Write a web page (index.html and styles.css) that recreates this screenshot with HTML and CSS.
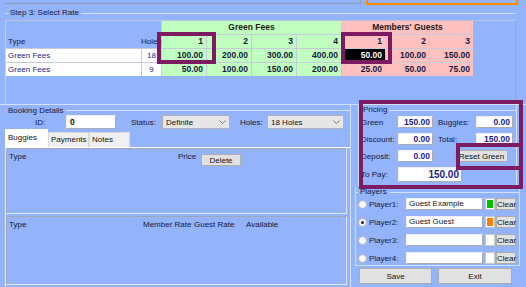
FILE: index.html
```html
<!DOCTYPE html>
<html lang="en">
<head>
  <meta charset="UTF-8">
  <meta name="viewport" content="width=device-width, initial-scale=1.0">
  <title>Select Rate</title>
  <link rel="stylesheet" href="styles.css">
</head>
<body>
  <div class="screen">
    <div class="top-strip">
      <div class="prev-panel"></div>
      <div class="prev-tab"></div>
    </div>

    <!-- Step 3 rate grid -->
    <section class="rates">
      <div class="group-title step-title"><span>Step 3: Select Rate</span></div>
      <div class="rate-box">
        <div class="rate-grid">
          <div class="cell blank type-hd">Type</div>
          <div class="cell blank holes-hd">Holes</div>
          <div class="cell green group-hd span-green">Green Fees</div>
          <div class="cell pink group-hd span-pink">Members' Guests</div>

          <div class="cell green num">1</div>
          <div class="cell green num">2</div>
          <div class="cell green num">3</div>
          <div class="cell green num">4</div>
          <div class="cell pink num">1</div>
          <div class="cell pink num">2</div>
          <div class="cell pink num">3</div>

          <div class="cell white type-cell">Green Fees</div>
          <div class="cell white holes-cell">18</div>
          <div class="cell green num">100.00</div>
          <div class="cell green num">200.00</div>
          <div class="cell green num">300.00</div>
          <div class="cell green num">400.00</div>
          <div class="cell sel num">50.00</div>
          <div class="cell pink num">100.00</div>
          <div class="cell pink num">150.00</div>

          <div class="cell white type-cell">Green Fees</div>
          <div class="cell white holes-cell">9</div>
          <div class="cell green num">50.00</div>
          <div class="cell green num">100.00</div>
          <div class="cell green num">150.00</div>
          <div class="cell green num">200.00</div>
          <div class="cell pink num">25.00</div>
          <div class="cell pink num">50.00</div>
          <div class="cell pink num">75.00</div>
        </div>
      </div>
    </section>

    <div class="lower">
      <!-- Booking details -->
      <div class="booking">
        <div class="group-title booking-title"><span>Booking Details</span></div>
        <div class="fields">
          <span class="lbl lbl-id">ID:</span>
          <div class="input id-input">0</div>
          <span class="lbl lbl-status">Status:</span>
          <div class="select status-select">
            <span>Definite</span>
            <svg width="7" height="4" viewBox="0 0 7 4"><path d="M0.5 0.5L3.5 3.5L6.5 0.5" fill="none" stroke="#777"/></svg>
          </div>
          <span class="lbl lbl-holes">Holes:</span>
          <div class="select holes-select">
            <span>18 Holes</span>
            <svg width="7" height="4" viewBox="0 0 7 4"><path d="M0.5 0.5L3.5 3.5L6.5 0.5" fill="none" stroke="#777"/></svg>
          </div>
        </div>

        <div class="tabs">
          <div class="tab active">Buggies</div>
          <div class="tab">Payments</div>
          <div class="tab">Notes</div>
        </div>

        <div class="tab-panel">
          <div class="list buggies-list">
            <div class="list-head">
              <span class="col-type">Type</span>
              <span class="col-price">Price</span>
              <button class="btn delete-btn">Delete</button>
            </div>
          </div>
          <div class="list extras-list">
            <div class="list-head">
              <span class="col-type2">Type</span>
              <span class="col-member">Member Rate</span>
              <span class="col-guest">Guest Rate</span>
              <span>Available</span>
            </div>
          </div>
        </div>
      </div>

      <!-- Pricing and players -->
      <div class="side">
        <div class="group pricing">
          <div class="group-title"><span>Pricing</span></div>
          <div class="price-grid">
            <span class="plbl">Green</span>
            <div class="input money">150.00</div>
            <span></span>
            <span class="plbl">Buggies:</span>
            <div class="input money">0.00</div>

            <span class="plbl">Discount:</span>
            <div class="input money">0.00</div>
            <span></span>
            <span class="plbl">Total:</span>
            <div class="input money">150.00</div>

            <span class="plbl">Deposit:</span>
            <div class="input money">0.00</div>
            <button class="btn reset-btn">Reset Green</button>

            <span class="plbl">To Pay:</span>
            <div class="input money to-pay">150.00</div>
          </div>
        </div>

        <div class="group players">
          <div class="group-title"><span>Players</span></div>
          <div class="player-rows">
            <div class="player-row">
              <span class="radio"></span>
              <span class="plabel">Player1:</span>
              <div class="input pname">Guest Example</div>
              <span class="swatch swatch-green"></span>
              <button class="btn clear-btn">Clear</button>
            </div>
            <div class="player-row">
              <span class="radio checked"></span>
              <span class="plabel">Player2:</span>
              <div class="input pname">Guest Guest</div>
              <span class="swatch swatch-orange"></span>
              <button class="btn clear-btn">Clear</button>
            </div>
            <div class="player-row">
              <span class="radio"></span>
              <span class="plabel">Player3:</span>
              <div class="input pname"></div>
              <span class="swatch"></span>
              <button class="btn clear-btn">Clear</button>
            </div>
            <div class="player-row">
              <span class="radio"></span>
              <span class="plabel">Player4:</span>
              <div class="input pname"></div>
              <span class="swatch"></span>
              <button class="btn clear-btn">Clear</button>
            </div>
          </div>
        </div>

        <div class="actions">
          <button class="btn save-btn">Save</button>
          <button class="btn exit-btn">Exit</button>
        </div>
      </div>
    </div>

    <!-- annotation boxes drawn over the form -->
    <div class="mark mark-green"></div>
    <div class="mark mark-guest"></div>
    <div class="mark mark-pricing"></div>
    <div class="mark mark-reset"></div>
  </div>
</body>
</html>
```

FILE: styles.css
```css
* {
  box-sizing: border-box;
}

body {
  margin: 0;
  font-family: "Liberation Sans", Arial, sans-serif;
  font-size: 8px;
  color: #151a3c;
  background-color: #93b3fa;
}

.screen {
  position: relative;
  width: 526px;
  height: 287px;
  overflow: hidden;
  background-color: #93b3fa;
}

/* bits of the previous step peeking in at the top */
.top-strip {
  display: flex;
  height: 6px;
}

.prev-panel {
  margin-left: 5px;
  width: 356px;
  height: 4px;
  border-bottom: 1px solid #8e99b2;
  border-right: 1px solid #8e99b2;
}

.prev-tab {
  margin-left: 5px;
  width: 152px;
  height: 5px;
  border: 2px solid #ff8a00;
  border-top: none;
}

/* group box titles */
.group-title {
  display: flex;
  align-items: center;
  height: 10px;
  line-height: 10px;
  white-space: nowrap;
}

.group-title::before {
  content: "";
  width: 2px;
  border-top: 1px solid #d3e0fd;
  margin-right: 2px;
}

.group-title::after {
  content: "";
  flex: 1;
  border-top: 1px solid #d3e0fd;
  margin-left: 2px;
}

.step-title {
  height: 14px;
}

.step-title::before {
  width: 3px;
}

/* rate grid */
.rates {
  margin-left: 5px;
  width: 511px;
}

.rate-box {
  height: 84px;
  border-top: 1px solid #b9c4da;
  border-left: 1px solid #c6d2ea;
  border-right: 1px solid #9aa3b5;
}

.rate-grid {
  display: grid;
  grid-template-columns: 135px 19px repeat(4, 44px) repeat(3, 43px);
  grid-template-rows: repeat(4, 13px);
  gap: 1px;
  width: max-content;
  background-color: #c4cbd9;
}

.cell {
  line-height: 13px;
  padding: 0 3px;
  white-space: nowrap;
  overflow: hidden;
}

.blank {
  background-color: #93b3fa;
}

.green {
  background-color: #c0ffc0;
}

.pink {
  background-color: #ffc0c0;
}

.white {
  background-color: #ffffff;
}

.sel {
  background-color: #000000;
  color: #ffffff;
}

.num {
  text-align: right;
  font-weight: bold;
  font-size: 8.5px;
}

.group-hd {
  text-align: center;
  font-weight: bold;
  font-size: 8.5px;
  color: #2a1a10;
}

.span-green {
  grid-column: 3 / span 4;
}

.span-pink {
  grid-column: 7 / span 3;
}

.type-hd,
.holes-hd {
  grid-row: 1 / span 2;
  display: flex;
  align-items: flex-end;
  padding-left: 2px;
}

.holes-hd {
  padding: 0;
  margin-left: -1px;
  overflow: visible;
}

.type-cell {
  padding-left: 2px;
  color: #25258a;
}

.holes-cell {
  text-align: center;
  color: #25258a;
}

/* lower half */
.lower {
  display: flex;
  height: 183px;
  border-top: 1px solid #d3e0fd;
}

.booking {
  width: 351px;
  border-right: 1px solid #d3e0fd;
}

.booking-title {
  margin-top: 1px;
  height: 9px;
  margin-left: 5px;
}

.booking-title::before {
  width: 1px;
}

.fields {
  display: flex;
  align-items: center;
  height: 14px;
}

.lbl {
  white-space: nowrap;
}

.lbl-id {
  margin-left: 35px;
  width: 11px;
}

.lbl-status {
  margin-left: 15px;
  width: 25px;
}

.lbl-holes {
  margin-left: 10px;
  width: 23px;
}

.input {
  background-color: #ffffff;
  border: 1px solid;
  border-color: #eef0f4 #a7abb5 #a7abb5 #eef0f4;
  white-space: nowrap;
  overflow: hidden;
}

.id-input {
  margin-left: 20px;
  width: 50px;
  height: 14px;
  line-height: 12px;
  padding-left: 3px;
  font-weight: bold;
  font-size: 8.5px;
  color: #111111;
}

.select {
  display: flex;
  align-items: center;
  justify-content: space-between;
  height: 14px;
  padding: 0 3px 0 3px;
  background-color: #e6e6e6;
  border: 1px solid #b3b3b3;
  color: #111111;
}

.status-select {
  margin-left: 6px;
  width: 68px;
}

.holes-select {
  margin-left: 4px;
  width: 77px;
}

/* tabs */
.tabs {
  display: flex;
  align-items: flex-end;
  height: 18px;
  margin-left: 5px;
}

.tab {
  height: 15px;
  line-height: 14px;
  padding-left: 2px;
  width: 41px;
  background-color: #f0f0f0;
  border: 1px solid #d9d9d9;
  border-bottom: none;
  color: #111111;
}

.tab.active {
  width: 43px;
  height: 18px;
  line-height: 17px;
  padding-left: 3px;
  background-color: #ffffff;
  border: none;
}

.tab-panel {
  margin-left: 5px;
  width: 345px;
  height: 140px;
  border-top: 1px solid #ffffff;
  border-left: 1px solid #e9effd;
}

.list {
  width: 341px;
  border: 1px solid;
  border-color: #9ea6b8 #e2e9fb #e2e9fb #9ea6b8;
}

.buggies-list {
  height: 66px;
}

.extras-list {
  margin-top: 2px;
  height: 69px;
}

.list-head {
  display: flex;
  align-items: center;
  height: 14px;
  padding-left: 2px;
  white-space: nowrap;
}

.col-type {
  width: 169px;
}

.col-price {
  width: 23px;
}

.col-type2 {
  width: 134px;
}

.col-member {
  width: 51px;
}

.col-guest {
  width: 52px;
}

.btn {
  padding: 0;
  font-family: "Liberation Sans", Arial, sans-serif;
  font-size: 8px;
  color: #111111;
  background-color: #e1e1e1;
  border: 1px solid #adadad;
}

.delete-btn {
  margin-top: 8px;
  width: 40px;
  height: 12px;
}

/* side panel */
.side {
  width: 170px;
}

.group {
  border: 1px solid #d3e0fd;
  border-top: none;
}

.pricing {
  margin-left: 7px;
  width: 159px;
  padding-bottom: 3px;
}

.price-grid {
  display: grid;
  grid-template-columns: 37px 35px 5px 38px 37px;
  grid-template-rows: 12px 12px 12px 15px;
  row-gap: 5px;
  margin-top: 1px;
  padding-left: 2px;
  align-items: center;
}

.plbl {
  white-space: nowrap;
}

.money {
  height: 12px;
  line-height: 10px;
  padding-right: 2px;
  text-align: right;
  font-weight: bold;
  font-size: 8.5px;
  color: #1d1d8c;
}

.reset-btn {
  grid-column: 3 / span 3;
  margin-left: 22px;
  width: 53px;
  height: 12px;
}

.to-pay {
  grid-column: 2 / span 3;
  width: 64px;
  height: 15px;
  line-height: 13px;
  font-size: 10px;
}

.players {
  margin-top: 1px;
  margin-left: 4px;
  width: 165px;
  padding-bottom: 1px;
}

.player-rows {
  display: flex;
  flex-direction: column;
  gap: 6px;
  margin-top: 1px;
}

.player-row {
  display: flex;
  align-items: center;
  height: 12px;
}

.radio {
  margin-left: 2px;
  width: 9px;
  height: 9px;
  border-radius: 50%;
  border: 1px solid #b4b4b4;
  background-color: #f7f7f7;
  display: flex;
  align-items: center;
  justify-content: center;
}

.radio.checked::after {
  content: "";
  width: 3px;
  height: 3px;
  border-radius: 50%;
  background-color: #222222;
}

.plabel {
  margin-left: 2px;
  width: 37px;
  white-space: nowrap;
}

.pname {
  width: 77px;
  height: 12px;
  line-height: 10px;
  padding-left: 2px;
  color: #111111;
}

.swatch {
  margin-left: 2px;
  width: 10px;
  height: 12px;
  background-color: #ffffff;
  border: 1px solid #c9c9c9;
}

.swatch-green {
  background-color: #00c000;
  box-shadow: inset 0 0 0 1px #ffffff;
}

.swatch-orange {
  background-color: #ff8000;
  box-shadow: inset 0 0 0 1px #ffffff;
}

.clear-btn {
  margin-left: 1px;
  width: 20px;
  height: 12px;
}

.actions {
  display: flex;
  margin-top: 2px;
}

.save-btn {
  margin-left: 8px;
  width: 73px;
  height: 16px;
}

.exit-btn {
  margin-left: 6px;
  width: 74px;
  height: 16px;
}

/* purple annotation boxes */
.mark {
  position: absolute;
  border: 4px solid #7c1a62;
}

.mark-green {
  left: 157px;
  top: 32px;
  width: 59px;
  height: 32px;
}

.mark-guest {
  left: 341px;
  top: 32px;
  width: 51px;
  height: 32px;
}

.mark-pricing {
  left: 359px;
  top: 100px;
  width: 164px;
  height: 89px;
}

.mark-reset {
  left: 456px;
  top: 143px;
  width: 67px;
  height: 27px;
}
```
